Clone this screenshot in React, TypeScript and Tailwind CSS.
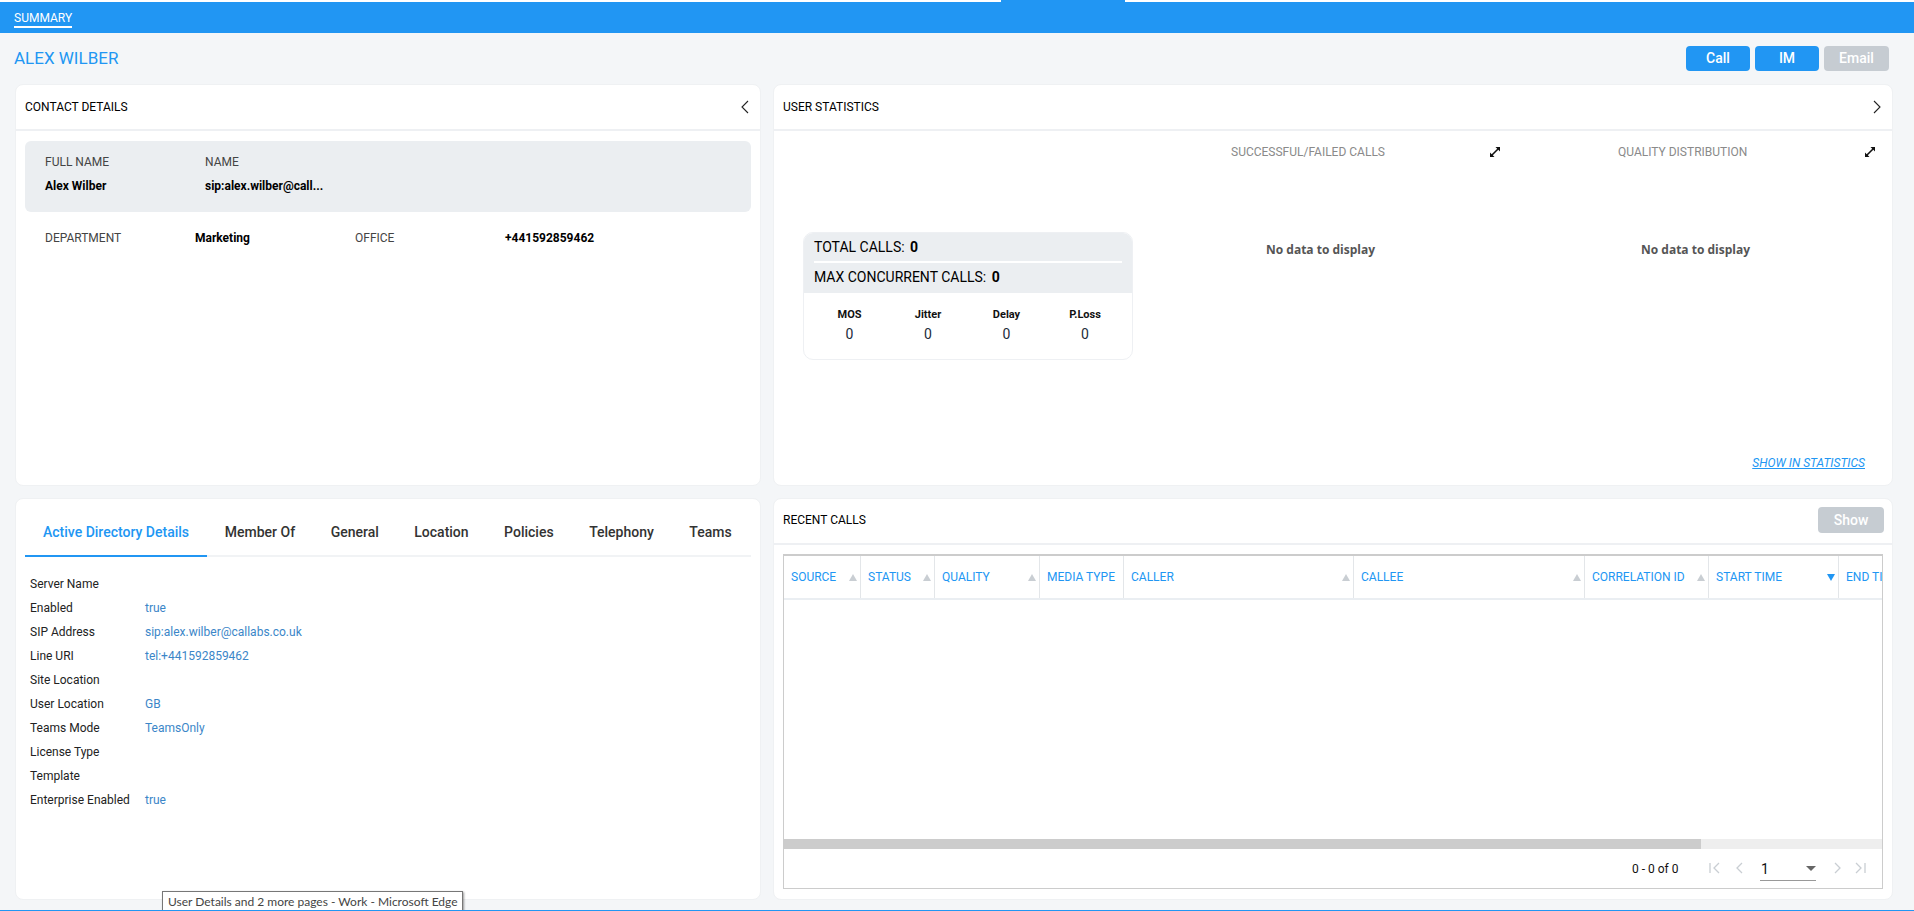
const columns = [
  { label: "SOURCE", w: 77 },
  { label: "STATUS", w: 74 },
  { label: "QUALITY", w: 105 },
  { label: "MEDIA TYPE", w: 84, noSort: true },
  { label: "CALLER", w: 230 },
  { label: "CALLEE", w: 231 },
  { label: "CORRELATION ID", w: 124 },
  { label: "START TIME", w: 130, active: true },
  { label: "END TI", w: 44, last: true },
];

const adRows: [string, string][] = [
  ["Server Name", ""],
  ["Enabled", "true"],
  ["SIP Address", "sip:alex.wilber@callabs.co.uk"],
  ["Line URI", "tel:+441592859462"],
  ["Site Location", ""],
  ["User Location", "GB"],
  ["Teams Mode", "TeamsOnly"],
  ["License Type", ""],
  ["Template", ""],
  ["Enterprise Enabled", "true"],
];

const tabs = ["Member Of", "General", "Location", "Policies", "Telephony", "Teams"];

function Chevron({ dir }: { dir: "left" | "right" }) {
  return (
    <svg width="10" height="14" viewBox="0 0 10 14" fill="none" stroke="#222" strokeWidth="1.1">
      <path d={dir === "left" ? "M8 1 L2 7 L8 13" : "M2 1 L8 7 L2 13"} />
    </svg>
  );
}

function Expand() {
  return (
    <svg width="12" height="12" viewBox="0 0 12 12" fill="#111">
      <path d="M6.5 1 H11 V5.5 L9.3 3.8 L3.8 9.3 L5.5 11 H1 V6.5 L2.7 8.2 L8.2 2.7 Z" />
    </svg>
  );
}

function Stat({ label }: { label: string }) {
  return (
    <div className="flex flex-col items-center">
      <span className="text-[11px] font-bold leading-[14px] text-[#111]">{label}</span>
      <span className="mt-[3px] text-[14px] leading-[18px] text-[#1c2b3a]">0</span>
    </div>
  );
}

function PagerIcon({ d }: { d: string }) {
  return (
    <svg width="14" height="14" viewBox="0 0 14 14" fill="none" stroke="#c9ced3" strokeWidth="1.3">
      <path d={d} />
    </svg>
  );
}

export default function App() {
  return (
    <div
      className="relative h-[911px] w-[1914px] overflow-hidden bg-[#f4f6f8] text-[12px] text-black"
      style={{ fontFamily: "Roboto, sans-serif" }}
    >
      {/* top bar */}
      <div className="h-[2px] w-full bg-white" />
      <div className="absolute left-[1001px] top-0 h-[2px] w-[124px] bg-[#2196f3]" />
      <div className="h-[31px] w-full bg-[#2196f3] pl-[14px]">
        <span className="mt-[8px] inline-block border-b-2 border-white text-[12px] leading-[16px] text-white">
          SUMMARY
        </span>
      </div>

      {/* title row */}
      <div className="flex h-[51px] items-start justify-between pl-[14px] pr-[25px] pt-[13px]">
        <h1 className="text-[17px] font-normal leading-[24px] text-[#2196f3]">ALEX WILBER</h1>
        <div className="flex gap-[5px]">
          <button className="h-[25px] w-[64px] rounded-[4px] bg-[#2196f3] text-[14px] font-medium text-white">Call</button>
          <button className="h-[25px] w-[64px] rounded-[4px] bg-[#2196f3] text-[14px] font-medium text-white">IM</button>
          <button className="h-[25px] w-[65px] rounded-[4px] bg-[#c6ccd2] text-[14px] font-medium text-white">Email</button>
        </div>
      </div>

      {/* grid of panels */}
      <div className="grid grid-cols-[746px_1120px] grid-rows-[402px_402px] gap-x-[12px] gap-y-[12px] pl-[15px]">
        {/* contact details */}
        <section className="rounded-[8px] border border-[#eff1f3] bg-white">
          <div className="flex h-[46px] items-center justify-between border-b-2 border-[#eef0f3] pl-[9px] pr-[10px]">
            <span className="text-[12px]">CONTACT DETAILS</span>
            <Chevron dir="left" />
          </div>
          <div className="mx-[9px] mt-[10px] h-[71px] rounded-[6px] bg-[#ebeef1] pl-[20px] pt-[13px]">
            <div className="flex leading-[16px] text-[#444]">
              <span className="w-[160px]">FULL NAME</span>
              <span>NAME</span>
            </div>
            <div className="mt-[8px] flex font-bold leading-[16px] text-black">
              <span className="w-[160px]">Alex Wilber</span>
              <span>sip:alex.wilber@call...</span>
            </div>
          </div>
          <div className="relative mt-[18px] h-[16px] leading-[16px]">
            <span className="absolute left-[29px] text-[#444]">DEPARTMENT</span>
            <span className="absolute left-[179px] font-bold">Marketing</span>
            <span className="absolute left-[339px] text-[#444]">OFFICE</span>
            <span className="absolute left-[489px] font-bold">+441592859462</span>
          </div>
        </section>

        {/* user statistics */}
        <section className="relative rounded-[8px] border border-[#eff1f3] bg-white">
          <div className="flex h-[46px] items-center justify-between border-b-2 border-[#eef0f3] pl-[9px] pr-[10px]">
            <span className="text-[12px]">USER STATISTICS</span>
            <Chevron dir="right" />
          </div>
          <span className="absolute left-[457px] top-[59px] leading-[16px] text-[#8a8a8a]">SUCCESSFUL/FAILED CALLS</span>
          <span className="absolute left-[715px] top-[61px]"><Expand /></span>
          <span className="absolute left-[844px] top-[59px] leading-[16px] text-[#8a8a8a]">QUALITY DISTRIBUTION</span>
          <span className="absolute left-[1090px] top-[61px]"><Expand /></span>
          <span
            className="absolute left-[492px] top-[157px] whitespace-nowrap font-bold leading-[16px] text-[#555]"
            style={{ fontFamily: '"Open Sans", sans-serif' }}
          >
            No data to display
          </span>
          <span
            className="absolute left-[867px] top-[157px] whitespace-nowrap font-bold leading-[16px] text-[#555]"
            style={{ fontFamily: '"Open Sans", sans-serif' }}
          >
            No data to display
          </span>

          <div className="absolute left-[29px] top-[147px] h-[128px] w-[330px] overflow-hidden rounded-[10px] border border-[#eef0f3]">
            <div className="h-[60px] bg-[#ebeef1] px-[10px]">
              <div className="h-[30px] border-b-2 border-white text-[14px] leading-[28px]">
                TOTAL CALLS: <b className="ml-[2px] font-bold">0</b>
              </div>
              <div className="text-[14px] leading-[28px]">
                MAX CONCURRENT CALLS: <b className="ml-[2px] font-bold">0</b>
              </div>
            </div>
            <div className="grid grid-cols-[79px_78px_79px_78px] pl-[6px] pt-[15px]">
              <Stat label="MOS" />
              <Stat label="Jitter" />
              <Stat label="Delay" />
              <Stat label="P.Loss" />
            </div>
          </div>

          <a className="absolute right-[27px] top-[370px] whitespace-nowrap text-[12px] italic leading-[16px] text-[#2196f3] underline">
            SHOW IN STATISTICS
          </a>
        </section>

        {/* directory details */}
        <section className="rounded-[8px] border border-[#eff1f3] bg-white">
          <div className="mx-[9px] mt-[9px] flex h-[49px] border-b-2 border-[#f1f3f5] text-[14px] font-medium">
            <div className="h-[49px] whitespace-nowrap border-b-2 border-[#2196f3] px-[18px] pt-[16px] leading-[16px] text-[#2196f3]">
              Active Directory Details
            </div>
            {tabs.map((t) => (
              <div key={t} className="whitespace-nowrap px-[17.75px] pt-[16px] leading-[16px] text-[#333]">{t}</div>
            ))}
          </div>
          <div className="pl-[14px] pt-[15px]">
            {adRows.map(([k, v]) => (
              <div key={k} className="flex h-[24px] items-center">
                <span className="w-[115px] text-[#222]">{k}</span>
                <span className="text-[#3b86c8]">{v}</span>
              </div>
            ))}
          </div>
        </section>

        {/* recent calls */}
        <section className="rounded-[8px] border border-[#eff1f3] bg-white">
          <div className="flex h-[46px] items-center justify-between border-b-2 border-[#eef0f3] pb-[2px] pl-[9px] pr-[8px]">
            <span className="text-[12px]">RECENT CALLS</span>
            <button className="h-[26px] w-[66px] rounded-[4px] bg-[#c6ccd2] text-[14px] font-medium text-white">Show</button>
          </div>
          <div className="ml-[9px] mt-[9px] flex h-[335px] w-[1100px] flex-col border border-t-2 border-[#cccccc]">
            <div className="flex h-[44px] shrink-0 overflow-hidden border-b-2 border-[#eaeef2]">
              {columns.map((c) => (
                <div
                  key={c.label}
                  className={`relative flex shrink-0 items-center pl-[7px] leading-[16px] text-[#2196f3] ${c.last ? "" : "border-r border-[#e3e6e9]"}`}
                  style={{ width: c.w }}
                >
                  <span className="whitespace-nowrap">{c.label}</span>
                  {!c.last && !c.noSort && (
                    <span
                      className={`absolute right-[3px] top-[18px] h-0 w-0 border-x-[4px] border-x-transparent ${
                        c.active ? "border-t-[7px] border-t-[#2196f3]" : "border-b-[7px] border-b-[#c9ced3]"
                      }`}
                    />
                  )}
                </div>
              ))}
            </div>
            <div className="flex-1" />
            <div className="h-[10px] shrink-0 bg-[#eeeeee]">
              <div className="h-[10px] w-[917px] bg-[#cccccc]" />
            </div>
            <div className="relative h-[39px] shrink-0 text-[12px]">
              <span className="absolute left-[848px] top-[12px] leading-[16px] text-[#111]">0 - 0 of 0</span>
              <span className="absolute left-[924px] top-[12px]"><PagerIcon d="M2 2 V12 M11 2 L6 7 L11 12" /></span>
              <span className="absolute left-[948px] top-[12px]"><PagerIcon d="M10 2 L5 7 L10 12" /></span>
              <div className="absolute left-[976px] top-[8px] flex h-[24px] w-[56px] items-start justify-between border-b border-[#999]">
                <span className="pl-[1px] pt-[3px] text-[14px] leading-[18px] text-[#111]">1</span>
                <span className="mt-[9px] h-0 w-0 border-x-[5px] border-t-[5px] border-x-transparent border-t-[#666]" />
              </div>
              <span className="absolute left-[1047px] top-[12px]"><PagerIcon d="M4 2 L9 7 L4 12" /></span>
              <span className="absolute left-[1069px] top-[12px]"><PagerIcon d="M3 2 L8 7 L3 12 M12 2 V12" /></span>
            </div>
          </div>
        </section>
      </div>

      {/* OS tooltip */}
      <div
        className="absolute left-[162px] top-[891px] h-[20px] w-[301px] whitespace-nowrap border border-b-0 border-[#777] bg-white pl-[5px] text-[12px] leading-[19px] text-[#444] shadow-[1px_1px_2px_rgba(0,0,0,0.4)]"
        style={{ fontFamily: 'Lato, sans-serif' }}
      >
        User Details and 2 more pages - Work - Microsoft Edge
      </div>
      <div className="absolute bottom-0 left-0 h-[1px] w-full bg-[#2196f3]" />
    </div>
  );
}
